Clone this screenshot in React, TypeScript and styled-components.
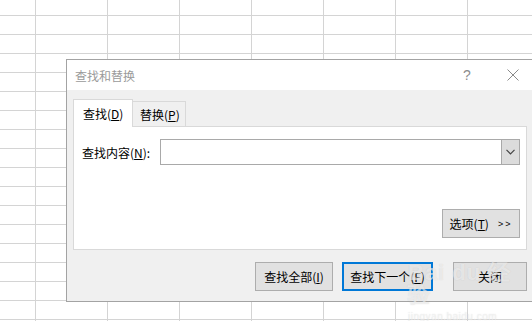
import React from 'react';
import styled, { createGlobalStyle } from 'styled-components';

const GlobalStyle = createGlobalStyle`
  html, body {
    margin: 0;
    padding: 0;
    overflow: hidden;
  }
  body {
    font-family: "Noto Sans CJK SC", "Noto Sans", sans-serif;
    font-size: 12px;
    color: #000;
  }
`;

const Sheet = styled.div`
  position: relative;
  width: 532px;
  height: 321px;
  overflow: hidden;
  background-color: #fff;
  background-image:
    linear-gradient(to right, #d4d4d4 1px, transparent 1px),
    linear-gradient(to bottom, #d4d4d4 1px, transparent 1px);
  background-size: 72px 19px;
  background-position: 35px 15px;
`;

const Dialog = styled.div`
  position: absolute;
  left: 66px;
  top: 59px;
  width: 466px;
  border: 1px solid #a3a3a3;
  background: #f0f0f0;
  display: flex;
  flex-direction: column;
`;

const TitleBar = styled.div`
  height: 30px;
  background: #fff;
  display: flex;
  align-items: center;
  padding-left: 8px;
  color: #9a9a9a;
`;

const Title = styled.span`
  flex: 1;
`;

const HelpMark = styled.span`
  width: 12px;
  margin-right: 34px;
  text-align: center;
  font-family: "Liberation Sans", sans-serif;
  font-size: 14px;
  color: #8c8c8c;
`;

const CloseMark = styled.svg`
  width: 12px;
  height: 12px;
  margin-right: 14px;
`;

const Body = styled.div`
  height: 211px;
  box-sizing: border-box;
  padding: 9px 6px 0 6px;
`;

const TabRow = styled.div`
  display: flex;
  align-items: flex-end;
  height: 28px;
  margin-bottom: -1px;
  position: relative;
  z-index: 1;
`;

const Tab = styled.div<{ $active?: boolean }>`
  box-sizing: border-box;
  height: ${(p) => (p.$active ? 28 : 26)}px;
  width: ${(p) => (p.$active ? 60 : 53)}px;
  padding-left: ${(p) => (p.$active ? 9 : 7)}px;
  background: ${(p) => (p.$active ? '#fff' : '#f0f0f0')};
  border: 1px solid #d9d9d9;
  border-bottom: ${(p) => (p.$active ? 'none' : '1px solid #d9d9d9')};
  border-left: ${(p) => (p.$active ? '1px solid #d9d9d9' : 'none')};
  display: flex;
  align-items: center;
  padding-bottom: ${(p) => (p.$active ? 1 : 0)}px;
`;

const Panel = styled.div`
  height: 124px;
  box-sizing: border-box;
  background: #fff;
  border: 1px solid #d9d9d9;
  padding: 12px 6px 11px 8px;
  display: flex;
  flex-direction: column;
  justify-content: space-between;
`;

const FieldRow = styled.div`
  display: flex;
  align-items: center;
`;

const Label = styled.label`
  width: 78px;
`;

const Combo = styled.div`
  flex: 1;
  height: 26px;
  box-sizing: border-box;
  border: 1px solid #a9a9a9;
  display: flex;
  justify-content: flex-end;
`;

const DropButton = styled.div`
  width: 18px;
  box-sizing: border-box;
  border-left: 1px solid #a9a9a9;
  background: #dcdcdc;
  display: flex;
  align-items: center;
  justify-content: center;
`;

const OptionsRow = styled.div`
  display: flex;
  justify-content: flex-end;
`;

const Button = styled.button<{ $w: number; $primary?: boolean }>`
  width: ${(p) => p.$w}px;
  height: 29px;
  box-sizing: border-box;
  border: ${(p) => (p.$primary ? '2px solid #0078d7' : '1px solid #adadad')};
  background: #e1e1e1;
  font-family: inherit;
  font-size: 12px;
  color: #000;
  padding: 0;
  display: flex;
  align-items: center;
  justify-content: center;
`;

const Arrows = styled.span`
  font-family: "Liberation Sans", sans-serif;
  font-size: 9px;
  margin-left: 9px;
  letter-spacing: 2px;
`;

const ButtonRow = styled.div`
  display: flex;
  justify-content: flex-end;
  gap: 9px;
  margin-top: 12px;
`;

const CloseWrap = styled.div`
  margin-left: 11px;
`;

const Watermark = styled.div`
  position: absolute;
  left: 408px;
  top: 262px;
  color: rgba(255, 255, 255, 0.55);
  text-shadow: 0 0 1px rgba(150, 150, 150, 0.35);
  font-family: "Liberation Sans", sans-serif;
  pointer-events: none;
  line-height: 1;
`;

const MarkBig = styled.div`
  font-size: 22px;
  font-weight: bold;
  letter-spacing: 1px;
`;

const MarkSmall = styled.div`
  font-size: 10px;
  margin-top: 6px;
  letter-spacing: 0.5px;
`;

export default function App() {
  return (
    <Sheet>
      <GlobalStyle />
      <Dialog>
        <TitleBar>
          <Title>查找和替换</Title>
          <HelpMark>?</HelpMark>
          <CloseMark viewBox="0 0 12 12">
            <path d="M0.5 0.5 L11.5 11.5 M11.5 0.5 L0.5 11.5" stroke="#8a8a8a" strokeWidth="1" fill="none" />
          </CloseMark>
        </TitleBar>
        <Body>
          <TabRow>
            <Tab $active>查找(<u>D</u>)</Tab>
            <Tab>替换(<u>P</u>)</Tab>
          </TabRow>
          <Panel>
            <FieldRow>
              <Label>查找内容(<u>N</u>):</Label>
              <Combo>
                <DropButton>
                  <svg width="9" height="6" viewBox="0 0 9 6">
                    <path d="M0.5 0.8 L4.5 4.8 L8.5 0.8" stroke="#444" strokeWidth="1.2" fill="none" />
                  </svg>
                </DropButton>
              </Combo>
            </FieldRow>
            <OptionsRow>
              <Button $w={78}>
                选项(<u>T</u>)<Arrows>&gt;&gt;</Arrows>
              </Button>
            </OptionsRow>
          </Panel>
          <ButtonRow>
            <Button $w={78}>查找全部(<u>I</u>)</Button>
            <Button $w={91} $primary>查找下一个(<u>F</u>)</Button>
            <CloseWrap>
              <Button $w={74}>关闭</Button>
            </CloseWrap>
          </ButtonRow>
        </Body>
      </Dialog>
      <Watermark>
        <MarkBig>Bai du 经验</MarkBig>
        <MarkSmall>jingyan.baidu.com</MarkSmall>
      </Watermark>
    </Sheet>
  );
}
